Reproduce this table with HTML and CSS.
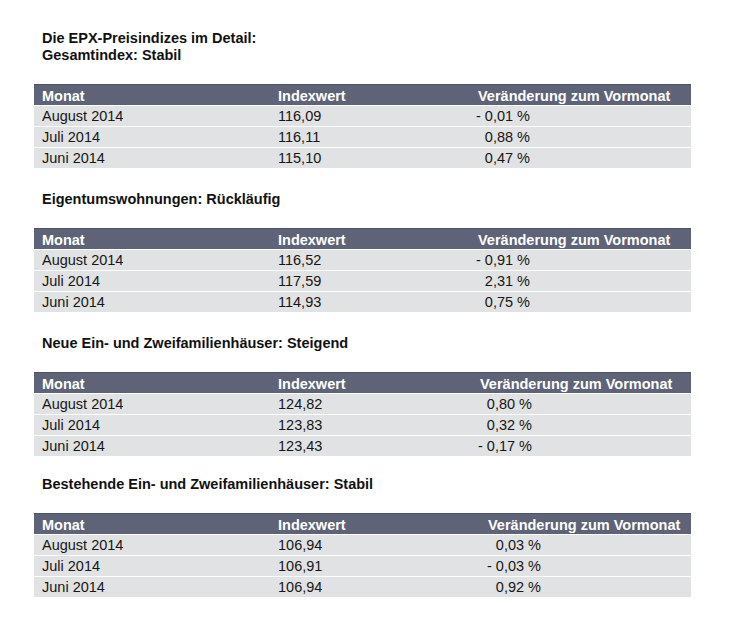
FILE: index.html
```html
<!DOCTYPE html>
<html lang="de">
<head>
<meta charset="utf-8">
<title>EPX-Preisindizes</title>
<link rel="stylesheet" href="styles.css">
</head>
<body>
<main class="page">
  <section class="section first">
    <h2 class="heading">Die EPX-Preisindizes im Detail:<br>Gesamtindex: Stabil</h2>
    <div class="table t1">
      <div class="row head"><span>Monat</span><span>Indexwert</span><span class="c3">Veränderung zum Vormonat</span></div>
      <div class="row"><span>August 2014</span><span>116,09</span><span class="c3"><span class="val">- 0,01 %</span></span></div>
      <div class="row"><span>Juli 2014</span><span>116,11</span><span class="c3"><span class="val">0,88 %</span></span></div>
      <div class="row"><span>Juni 2014</span><span>115,10</span><span class="c3"><span class="val">0,47 %</span></span></div>
    </div>
  </section>
  <section class="section">
    <h2 class="heading">Eigentumswohnungen: Rückläufig</h2>
    <div class="table t1">
      <div class="row head"><span>Monat</span><span>Indexwert</span><span class="c3">Veränderung zum Vormonat</span></div>
      <div class="row"><span>August 2014</span><span>116,52</span><span class="c3"><span class="val">- 0,91 %</span></span></div>
      <div class="row"><span>Juli 2014</span><span>117,59</span><span class="c3"><span class="val">2,31 %</span></span></div>
      <div class="row"><span>Juni 2014</span><span>114,93</span><span class="c3"><span class="val">0,75 %</span></span></div>
    </div>
  </section>
  <section class="section">
    <h2 class="heading">Neue Ein- und Zweifamilienhäuser: Steigend</h2>
    <div class="table t3">
      <div class="row head"><span>Monat</span><span>Indexwert</span><span class="c3">Veränderung zum Vormonat</span></div>
      <div class="row"><span>August 2014</span><span>124,82</span><span class="c3"><span class="val">0,80 %</span></span></div>
      <div class="row"><span>Juli 2014</span><span>123,83</span><span class="c3"><span class="val">0,32 %</span></span></div>
      <div class="row"><span>Juni 2014</span><span>123,43</span><span class="c3"><span class="val">- 0,17 %</span></span></div>
    </div>
  </section>
  <section class="section last">
    <h2 class="heading">Bestehende Ein- und Zweifamilienhäuser: Stabil</h2>
    <div class="table t4">
      <div class="row head"><span>Monat</span><span>Indexwert</span><span class="c3">Veränderung zum Vormonat</span></div>
      <div class="row"><span>August 2014</span><span>106,94</span><span class="c3"><span class="val">0,03 %</span></span></div>
      <div class="row"><span>Juli 2014</span><span>106,91</span><span class="c3"><span class="val">- 0,03 %</span></span></div>
      <div class="row"><span>Juni 2014</span><span>106,94</span><span class="c3"><span class="val">0,92 %</span></span></div>
    </div>
  </section>
</main>
</body>
</html>
```
FILE: styles.css
```css
html, body {
  margin: 0;
  padding: 0;
  background: #ffffff;
}
body {
  font-family: "Liberation Sans", Arial, sans-serif;
  font-size: 14.5px;
  color: #161616;
}
.page {
  padding: 30px 0 0 34px;
  width: 657px;
}
.section {
  margin-top: 23px;
}
.section.first {
  margin-top: 0;
}
.section.last {
  margin-top: 20px;
}
.heading {
  margin: 0 0 20px 8px;
  font-size: 14.5px;
  font-weight: bold;
  line-height: 17px;
  color: #111111;
}
.table {
  width: 657px;
  --c3: 8px;
  --v: 0px;
}
.t3 { --c3: 10px; --v: 2px; }
.t4 { --c3: 18px; --v: 11px; }
.row {
  display: grid;
  grid-template-columns: 236px 200px 1fr;
  height: 20px;
  line-height: 20px;
  background: #e1e2e3;
  border-top: 1px solid #ffffff;
}
.row > span {
  padding-left: 8px;
  white-space: nowrap;
}
.row > .c3 {
  padding-left: var(--c3);
}
.row.head {
  height: 20px;
  line-height: 22px;
  border-top: 1px solid #4e5264;
  background: #5e6377;
  color: #ffffff;
  font-weight: bold;
}
.val {
  display: inline-block;
  width: 60px;
  text-align: right;
  margin-left: calc(var(--v) - var(--c3));
}
```
